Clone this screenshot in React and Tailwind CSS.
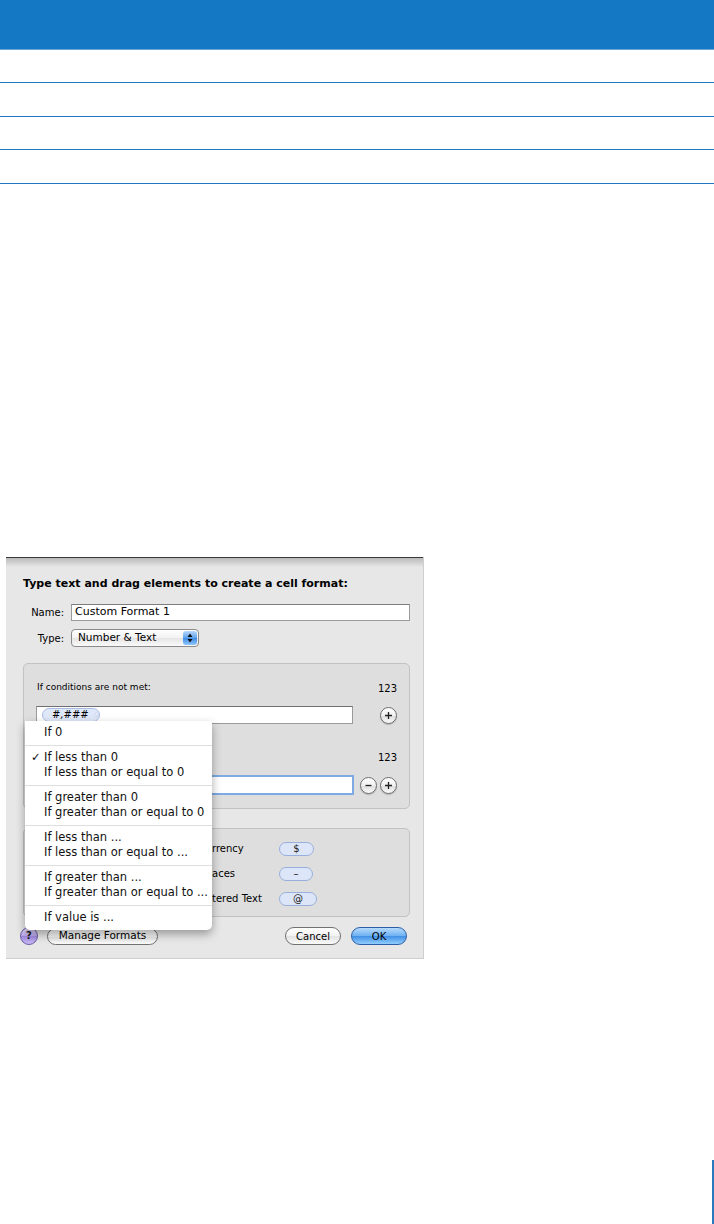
import React from "react";

const menuGroups = [
  ["If 0"],
  ["If less than 0", "If less than or equal to 0"],
  ["If greater than 0", "If greater than or equal to 0"],
  ["If less than ...", "If less than or equal to ..."],
  ["If greater than ...", "If greater than or equal to ..."],
  ["If value is ..."],
];

// labels are cut off by the open popup menu
const elements = [
  { label: "rrency", pill: "$", w: "w-[35px]" },
  { label: "aces", pill: "–", w: "w-[34px]" },
  { label: "tered Text", pill: "@", w: "w-[38px]" },
];

const RoundButton = ({ sign }) => (
  <div className="flex h-[17px] w-[17px] items-center justify-center rounded-full border border-[#6e6e6e] bg-[linear-gradient(#ffffff,#f0f0f0_50%,#dddddd_51%,#fafafa)] shadow-[0_1px_1px_rgba(0,0,0,0.2)]">
    <svg width="9" height="9" viewBox="0 0 9 9">
      <path
        d={sign === "+" ? "M4.5 1v7M1 4.5h7" : "M1.5 4.5h6"}
        stroke="#222"
        strokeWidth="1.3"
      />
    </svg>
  </div>
);

const Pill = ({ children, w }) => (
  <span
    className={`flex h-[14px] items-center justify-center rounded-full border border-[#98afdc] bg-[#dde6f8] text-[10px] leading-none text-[#222] ${w}`}
  >
    {children}
  </span>
);

const CellFormatDialog = () => {
  return (
    <div className="relative ml-[6px] h-[402px] w-[418px] border-r border-b border-[#cfcfcf] bg-[#e7e7e7] font-['DejaVu_Sans',sans-serif] text-black">
      <div className="h-[10px] border-t border-[#3a3a3a] bg-gradient-to-b from-[#bababa] to-[#e7e7e7]" />

      <div className="pl-[17px] pr-[13px]">
        <div className="mt-[10px] text-[11px] leading-[14px] font-bold">
          Type text and drag elements to create a cell format:
        </div>

        <div className="mt-[13px] flex h-[17px] items-center">
          <span className="w-[41px] text-right text-[10px]">Name:</span>
          <div className="ml-[7px] flex h-[17px] flex-1 items-center border border-[#9a9a9a] border-t-[#7d7d7d] bg-white pl-[3px] text-[11px]">
            Custom Format 1
          </div>
        </div>

        <div className="mt-[8px] flex h-[18px] items-center">
          <span className="w-[41px] text-right text-[10px]">Type:</span>
          <div className="ml-[7px] flex h-[18px] w-[128px] items-center justify-between rounded-[4px] border border-[#8a8a8a] bg-[linear-gradient(#ffffff,#f2f2f2_50%,#e4e4e4_51%,#fafafa)] pl-[6px] pr-[1px] text-[10.5px]">
            <span>Number &amp; Text</span>
            <div className="flex h-[14px] w-[14px] items-center justify-center rounded-[3px] bg-[linear-gradient(#b8d8fb,#5ea3ec_50%,#3e8be4_51%,#8ec6fb)]">
              <svg width="6" height="10" viewBox="0 0 6 10">
                <path d="M3 0.5L5.5 4H0.5z M3 9.5L5.5 6H0.5z" fill="#111" />
              </svg>
            </div>
          </div>
        </div>

        <div className="mt-[16px] h-[146px] rounded-[5px] border border-[#c2c2c2] bg-[#dedede] px-[12px]">
          <div className="mt-[17px] flex h-[14px] items-center justify-between">
            <span className="ml-[1px] text-[9px]">If conditions are not met:</span>
            <span className="text-[10px]">123</span>
          </div>
          <div className="mt-[11px] flex items-center justify-between">
            <div className="flex h-[18px] w-[317px] items-start border border-[#9a9a9a] border-t-[#707070] bg-white pt-[1px] pl-[5px]">
              <div className="flex h-[14px] w-[58px] items-center rounded-full border border-[#a9bde4] bg-[#dfe8f8] pl-[9px]">
                <span className="text-[10px] italic leading-none">#,###</span>
                <svg className="ml-[5px]" width="10" height="10" viewBox="0 0 10 10">
                  <circle cx="5" cy="5" r="4" fill="#eef2fb" stroke="#b4c3e3" strokeWidth="0.8" />
                  <path d="M3 4.2l2 2 2-2" stroke="#8a9cc4" fill="none" strokeWidth="0.9" />
                </svg>
              </div>
            </div>
            <RoundButton sign="+" />
          </div>

          <div className="mt-[26px] flex h-[14px] items-center justify-end">
            <span className="text-[10px]">123</span>
          </div>
          <div className="mt-[11px] flex items-center justify-between">
            <div className="h-[20px] w-[318px] border-2 border-[#7ea9e2] bg-white" />
            <div className="flex gap-[3px]">
              <RoundButton sign="-" />
              <RoundButton sign="+" />
            </div>
          </div>
        </div>

        <div className="mt-[19px] h-[89px] rounded-[5px] border border-[#c2c2c2] bg-[#dedede] pt-[7px] pl-[188px]">
          {elements.map((row) => (
            <div key={row.pill} className="flex h-[25px] items-center text-[10px]">
              <span className="w-[67px]">{row.label}</span>
              <Pill w={row.w}>{row.pill}</Pill>
            </div>
          ))}
        </div>

        <div className="mt-[10px] flex h-[18px] items-center">
          <div className="-ml-[3px] flex h-[18px] w-[18px] items-center justify-center rounded-full border border-[#6a5aa6] bg-[linear-gradient(#e6ddfb,#b9a6ec_50%,#9f88e0_51%,#cbbcf5)] text-[10px] font-bold leading-none text-[#1a1a1a]">
            ?
          </div>
          <div className="ml-[9px] flex h-[17px] w-[111px] items-center justify-center rounded-full border border-[#707070] bg-[linear-gradient(#ffffff,#f2f2f2_50%,#e2e2e2_51%,#fafafa)] text-[10.5px]">
            Manage Formats
          </div>
          <div className="ml-auto flex h-[18px] w-[56px] items-center justify-center rounded-full border border-[#707070] bg-[linear-gradient(#ffffff,#f2f2f2_50%,#e2e2e2_51%,#fafafa)] text-[10px]">
            Cancel
          </div>
          <div className="mr-[3px] ml-[10px] flex h-[18px] w-[56px] items-center justify-center rounded-full border border-[#2b5ea6] bg-[linear-gradient(#b6dafd,#6cb0f2_50%,#3f8fe6_51%,#92cdfd)] text-[10px]">
            OK
          </div>
        </div>
      </div>

      <div className="absolute top-[164px] left-[19px] w-[187px] rounded-b-[5px] bg-white text-[11.5px] leading-[15px] text-[#111] shadow-[0_4px_10px_rgba(0,0,0,0.35)]">
        {menuGroups.map((group, gi) => (
          <div
            key={gi}
            className={gi === 0 ? "pt-[4px] pb-[5px]" : "border-t border-[#dedede] pt-[4px] pb-[5px]"}
          >
            {group.map((item) => (
              <div key={item} className="relative pl-[19px]">
                {item === "If less than 0" && (
                  <span className="absolute left-[6px] top-0">✓</span>
                )}
                {item}
              </div>
            ))}
          </div>
        ))}
      </div>
    </div>
  );
};

const App = () => {
  return (
    <div className="flex h-[1224px] w-[714px] flex-col overflow-hidden bg-white">
      <div className="h-[50px] border-b border-[#6aa6da] bg-[#1578c5]" />
      <div className="h-[33px] border-b border-[#1f78c1]" />
      <div className="h-[34px] border-b border-[#1f78c1]" />
      <div className="h-[33px] border-b border-[#1f78c1]" />
      <div className="h-[34px] border-b border-[#1f78c1]" />

      <div className="mt-[373px]">
        <CellFormatDialog />
      </div>

      <div className="mt-auto flex justify-end">
        <div className="h-[64px] w-[2px] bg-[#2a78bd]" />
      </div>
    </div>
  );
};

export default App;
